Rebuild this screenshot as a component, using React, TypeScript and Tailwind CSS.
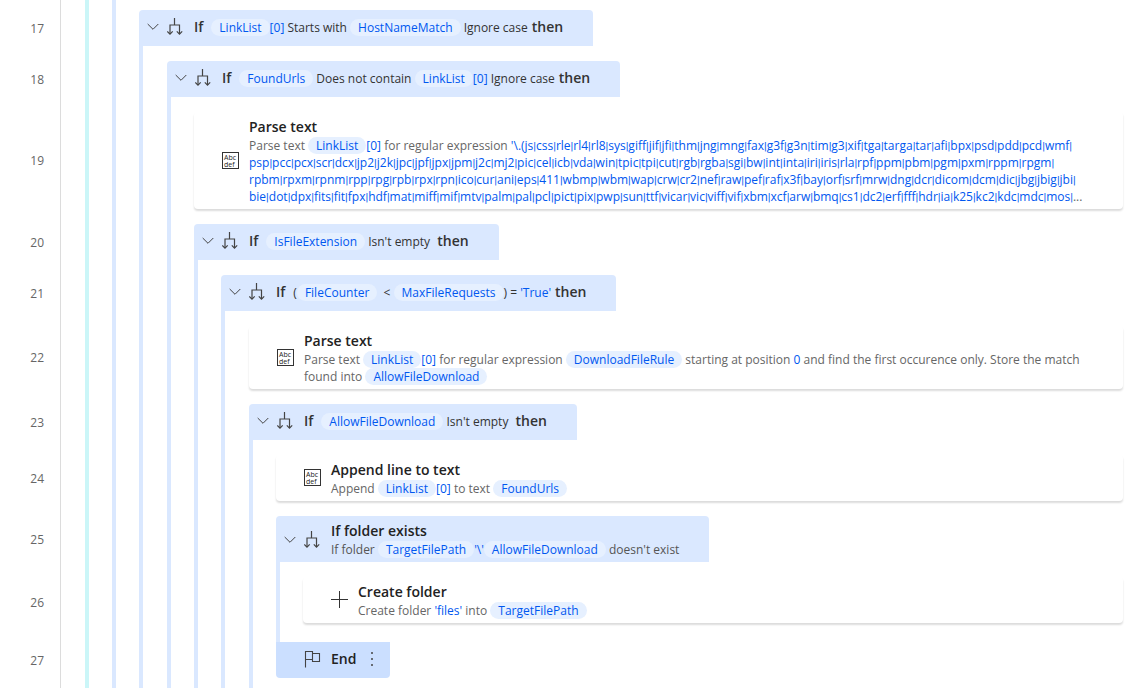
import { Fragment, ReactNode } from 'react'
import { clsx } from 'clsx'

type IconName = 'text' | 'plus'

interface RowProps {
  line: number
  depth: number
  children: ReactNode
  // header rows open a new lane that starts right below them
  opensBlock?: boolean
  // the last row of a block keeps a bit more distance to its End
  closesBlock?: boolean
}

const lanes = [
  'w-[27px]',
  'w-[27px]',
  'w-7',
  'w-[27px]',
  'w-[27px]',
  'w-7',
  'w-[27px]',
  'w-[27px]'
]

const patternLines = [
  "'\\.(js|css|rle|rl4|rl8|sys|giff|jif|jfi|thm|jng|mng|fax|g3f|g3n|tim|g3|xif|tga|targa|tar|afi|bpx|psd|pdd|pcd|wmf|",
  'psp|pcc|pcx|scr|dcx|jp2|j2k|jpc|jpf|jpx|jpm|j2c|mj2|pic|cel|icb|vda|win|tpic|tpi|cut|rgb|rgba|sgi|bw|int|inta|iri|iris|rla|rpf|ppm|pbm|pgm|pxm|rppm|rpgm|',
  'rpbm|rpxm|rpnm|rpp|rpg|rpb|rpx|rpn|ico|cur|ani|eps|411|wbmp|wbm|wap|crw|cr2|nef|raw|pef|raf|x3f|bay|orf|srf|mrw|dng|dcr|dicom|dcm|dic|jbg|jbig|jbi|',
  'bie|dot|dpx|fits|fit|fpx|hdf|mat|miff|mif|mtv|palm|pal|pcl|pict|pix|pwp|sun|ttf|vicar|vic|viff|vif|xbm|xcf|arw|bmq|cs1|dc2|erf|fff|hdr|ia|k25|kc2|kdc|mdc|mos|'
]

function BranchIcon() {
  return (
    <svg className="h-[18px] w-[17px] shrink-0" viewBox="0 0 17 18" fill="none" stroke="#444" strokeWidth="1.2">
      <path d="M7.5 0V7M3 16V7H12.5V16" />
      <path d="M0.3 13.4L3 16.2L5.7 13.4M9.8 13.4L12.5 16.2L15.2 13.4" />
    </svg>
  )
}

function TextIcon() {
  return (
    <svg className="mb-0.5 h-[17px] w-[17px] shrink-0" viewBox="0 0 17 17">
      <rect x="0.5" y="0.5" width="16" height="16" fill="none" stroke="#333" />
      <text x="2" y="7.5" fontSize="7" fill="#222">Abc</text>
      <text x="2" y="14.5" fontSize="7" fill="#222">def</text>
    </svg>
  )
}

function PlusIcon() {
  return (
    <svg className="mb-0.5 h-[17px] w-[17px] shrink-0" viewBox="0 0 17 17" stroke="#333">
      <path d="M0 8.5H17M8.5 0V17" />
    </svg>
  )
}

function FlagIcon() {
  return (
    <svg className="h-[18px] w-[17px] shrink-0" viewBox="0 0 17 18" fill="none" stroke="#444" strokeWidth="1.1">
      <path d="M1.5 17.5V1.5H8.5V9.5H1.5M8.5 3.5H15.5V11.5H8.5V9.5" />
    </svg>
  )
}

function CollapseButton() {
  return (
    <button type="button" aria-label="Collapse" className="shrink-0">
      <svg className="h-3 w-3" viewBox="0 0 12 12" fill="none" stroke="#444">
        <path d="M0.7 3L6 8.3L11.3 3" />
      </svg>
    </button>
  )
}

function Lanes({ count }: { count: number }) {
  return (
    <div className="flex shrink-0 pl-6">
      {lanes.slice(0, count).map((width, i) => (
        <div key={i} className={clsx('border-l-4', width, i === 0 ? 'border-[#cbf6f8]' : 'border-[#dae8ff]')} />
      ))}
    </div>
  )
}

function Row({ line, depth, children, opensBlock, closesBlock }: RowProps) {
  return (
    <li className="flex">
      <div className="flex w-[61px] shrink-0 items-center justify-end border-r border-[#dcdcdc] pr-4 pb-[15px] text-[#666]">
        {line}
      </div>
      <Lanes count={depth} />
      <div className="flex min-w-0 flex-1 flex-col">
        {children}
        <div className={clsx(closesBlock ? 'h-[19px]' : 'h-[15px]', opensBlock && 'border-l-4 border-[#dae8ff]')} />
      </div>
    </li>
  )
}

function Var({ children }: { children: string }) {
  return <span className="inline-block rounded-full bg-[#e6f0ff] px-2 text-[#0057f0]">{children}</span>
}

function Lit({ children }: { children: ReactNode }) {
  return <span className="text-[#0057f0]">{children}</span>
}

// Open Sans has a very wide bar, so the separators use Roboto
function Pattern({ text }: { text: string }) {
  return text.split('|').map((part, i) => (
    <Fragment key={i}>
      {i > 0 && <span className="font-['Roboto',sans-serif] text-[11px] leading-none">|</span>}
      {part}
    </Fragment>
  ))
}

function Condition({ line, depth, children }: { line: number; depth: number; children: ReactNode }) {
  return (
    <Row line={line} depth={depth} opensBlock>
      <div className="flex h-9 items-center self-start rounded-t bg-[#dae8ff] pr-[30px] pb-0.5 pl-2 whitespace-nowrap text-[#333]">
        <CollapseButton />
        <div className="flex w-[35px] pl-2">
          <BranchIcon />
        </div>
        <span className="mr-2 text-sm font-semibold">If</span>
        <span>{children}</span>
        <span className="ml-1 text-sm font-semibold">then</span>
      </div>
    </Row>
  )
}

interface ActionProps {
  line: number
  depth: number
  icon: IconName
  title: string
  closesBlock?: boolean
  children: ReactNode
}

function Action({ line, depth, icon, title, closesBlock, children }: ActionProps) {
  return (
    <Row line={line} depth={depth} closesBlock={closesBlock}>
      <div className="mr-[17px] flex items-center gap-[10px] rounded-sm pt-[5px] pb-1 pl-7 shadow-[0_2px_2px_rgba(0,0,0,0.14)]">
        {icon === 'text' ? <TextIcon /> : <PlusIcon />}
        <div>
          <h3 className="text-sm leading-5 font-semibold text-[#222]">{title}</h3>
          <p className="whitespace-nowrap text-[#666]">{children}</p>
        </div>
      </div>
    </Row>
  )
}

export default function App() {
  return (
    <main className="min-h-screen overflow-hidden bg-white font-['Open_Sans',sans-serif] text-xs leading-[17px]">
      <div className="flex h-[10px]">
        <div className="w-[61px] shrink-0 border-r border-[#dcdcdc]" />
        <Lanes count={2} />
      </div>
      <ol>
        <Condition line={17} depth={2}>
          <Var>LinkList</Var>
          <Lit>[0]</Lit> Starts with <Var>HostNameMatch</Var> Ignore case
        </Condition>
        <Condition line={18} depth={3}>
          <Var>FoundUrls</Var> Does not contain <Var>LinkList</Var>
          <Lit>[0]</Lit> Ignore case
        </Condition>
        <Action line={19} depth={4} icon="text" title="Parse text">
          Parse text <Var>LinkList</Var>
          <Lit>[0]</Lit> for regular expression{' '}
          {patternLines.map((text, i) => (
            <Lit key={i}>
              {i > 0 && <br />}
              <Pattern text={text} />
            </Lit>
          ))}
          ...
        </Action>
        <Condition line={20} depth={4}>
          <Var>IsFileExtension</Var> Isn't empty&nbsp;
        </Condition>
        <Condition line={21} depth={5}>
          (<Var>FileCounter</Var> &nbsp;&lt; <Var>MaxFileRequests</Var>) = <Lit>'True'</Lit>
        </Condition>
        <Action line={22} depth={6} icon="text" title="Parse text">
          Parse text <Var>LinkList</Var>
          <Lit>[0]</Lit> for regular expression <Var>DownloadFileRule</Var> starting at position <Lit>0</Lit> and find the
          first occurence only. Store the match
          <br />
          found into <Var>AllowFileDownload</Var>
        </Action>
        <Condition line={23} depth={6}>
          <Var>AllowFileDownload</Var> Isn't empty&nbsp;
        </Condition>
        <Action line={24} depth={7} icon="text" title="Append line to text">
          Append <Var>LinkList</Var>
          <Lit>[0]</Lit> to text <Var>FoundUrls</Var>
        </Action>
        <Row line={25} depth={7} opensBlock>
          <div className="flex items-center self-start rounded-t bg-[#dae8ff] pt-[5px] pr-[30px] pb-1 pl-2 whitespace-nowrap">
            <CollapseButton />
            <div className="flex w-[35px] pl-2">
              <BranchIcon />
            </div>
            <div>
              <h3 className="text-sm leading-5 font-semibold text-[#222]">If folder exists</h3>
              <p className="text-[#555]">
                If folder <Var>TargetFilePath</Var>
                <Lit>'\'</Lit>
                <Var>AllowFileDownload</Var> doesn't exist
              </p>
            </div>
          </div>
        </Row>
        <Action line={26} depth={8} icon="plus" title="Create folder" closesBlock>
          Create folder <Lit>'files'</Lit> into <Var>TargetFilePath</Var>
        </Action>
        <Row line={27} depth={7}>
          <div className="flex h-9 items-center self-start rounded-b bg-[#cbdfff] pr-3 pb-0.5 pl-7">
            <FlagIcon />
            <span className="ml-[10px] text-sm font-semibold text-[#222]">End</span>
            <button type="button" aria-label="More actions" className="ml-[10px] w-3">
              <svg className="h-4 w-3" viewBox="0 0 12 16" fill="#444">
                <circle cx="6" cy="2" r="1" />
                <circle cx="6" cy="8" r="1" />
                <circle cx="6" cy="14" r="1" />
              </svg>
            </button>
          </div>
        </Row>
      </ol>
    </main>
  )
}
